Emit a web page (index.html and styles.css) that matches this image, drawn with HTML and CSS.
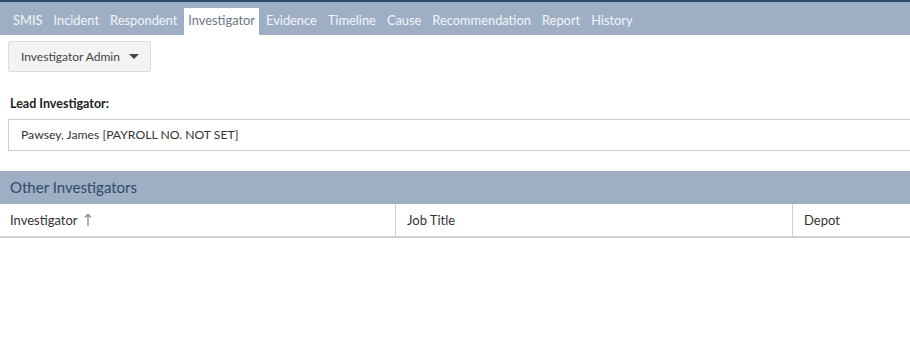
FILE: index.html
```html
<!DOCTYPE html>
<html lang="en">
<head>
<meta charset="UTF-8">
<meta name="viewport" content="width=device-width, initial-scale=1.0">
<title>Investigator</title>
<link rel="stylesheet" href="styles.css">
</head>
<body>
<div class="page">
    <ul class="tabs">
        <li>SMIS</li>
        <li>Incident</li>
        <li>Respondent</li>
        <li class="active">Investigator</li>
        <li>Evidence</li>
        <li>Timeline</li>
        <li>Cause</li>
        <li>Recommendation</li>
        <li>Report</li>
        <li>History</li>
    </ul>

    <div class="content">
        <button class="admin-btn">Investigator Admin <span class="caret"></span></button>

        <label class="field-label">Lead Investigator:</label>
        <div class="field-box">Pawsey, James [PAYROLL NO. NOT SET]</div>
    </div>

    <div class="section-head">Other Investigators</div>
    <table class="grid">
        <tr>
            <th class="col-name">Investigator
                <svg class="sort" width="8" height="14" viewBox="0 0 8 14"><path d="M4 1.5V13M1 4.5L4 1.5L7 4.5" fill="none" stroke="#8a8a8a" stroke-width="1.3"/></svg>
            </th>
            <th class="col-job">Job Title</th>
            <th>Depot</th>
        </tr>
    </table>
</div>
</body>
</html>
```

FILE: styles.css
```css
/* page */
html, body {
    overflow: hidden;
}

body {
    margin: 0;
    font-family: Lato, "Open Sans", sans-serif;
    color: #333;
    background-color: #fff;
}

.page {
    width: 940px;
}

/* tab bar */
.tabs {
    display: flex;
    gap: 3px;
    margin: 0;
    padding: 6px 0 0 9px;
    list-style: none;
    background-color: #9eafc5;
    border-top: 2px solid #2d4a6b;
}

.tabs li {
    padding: 0 4px;
    height: 27px;
    line-height: 25px;
    font-size: 12.85px;
    color: #f3f5f8;
}

.tabs li.active {
    background-color: #fff;
    color: #6c7686;
}

/* top form */
.content {
    padding: 6px 0 20px 8px;
}

.admin-btn {
    display: flex;
    align-items: center;
    gap: 9px;
    height: 31px;
    padding: 0 11px 0 12px;
    font-family: inherit;
    font-size: 12px;
    color: #444;
    background-color: #f3f3f3;
    border: 1px solid #dcdcdc;
    border-radius: 2px;
}

.caret {
    width: 0;
    height: 0;
    border-left: 5px solid transparent;
    border-right: 5px solid transparent;
    border-top: 5px solid #444;
}

.field-label {
    display: block;
    margin: 24px 0 8px 2px;
    font-size: 12.5px;
    font-weight: bold;
    color: #222;
}

.field-box {
    height: 30px;
    line-height: 30px;
    padding-left: 12px;
    font-size: 12.2px;
    color: #333;
    border: 1px solid #ccc;
}

/* other investigators */
.section-head {
    height: 33px;
    line-height: 33px;
    padding-left: 10px;
    font-size: 15px;
    color: #2d4a6b;
    background-color: #9eafc5;
}

.grid {
    width: 910px;
    border-collapse: collapse;
}

.grid th {
    height: 32px;
    padding: 0 10px;
    text-align: left;
    font-size: 13px;
    font-weight: normal;
    color: #333;
    border-bottom: 2px solid #d0d0d0;
}

.grid th + th {
    border-left: 1px solid #d0d0d0;
    padding-left: 11px;
}

.grid .col-name {
    width: 375px;
}

.grid .col-job {
    width: 375px;
}

.sort {
    vertical-align: -2px;
    margin-left: 3px;
}
```
